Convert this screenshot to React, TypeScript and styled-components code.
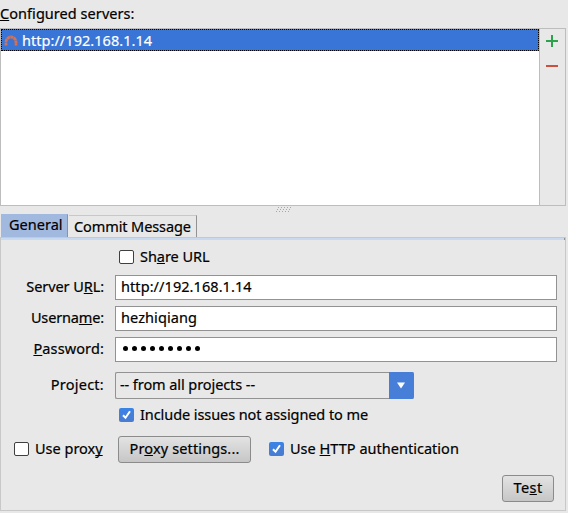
import React from 'react';
import styled, { createGlobalStyle } from 'styled-components';

const GlobalStyle = createGlobalStyle`
  * { box-sizing: border-box; }
  body { margin: 0; background: #e8e8e8; overflow: hidden; }
`;

const Window = styled.main`
  width: 568px;
  height: 513px;
  display: flex;
  flex-direction: column;
  background: #e8e8e8;
  color: #000;
  font: 14.5px/20px "Noto Sans", "Open Sans", sans-serif;
`;

const Text = styled.span<{ $track?: number }>`
  white-space: pre;
  letter-spacing: ${(p) => p.$track ?? 0}px;
  -webkit-text-stroke: 0.2px currentColor;
`;

const Mnemonic = styled.u`
  text-decoration-thickness: 1px;
  text-underline-offset: 1px;
  text-decoration-skip-ink: none;
`;

const Heading = styled.header`
  height: 28px;
  padding-top: 3px;
`;

const ServerBox = styled.section`
  display: flex;
  width: 566px;
  height: 178px;
  border: 1px solid #bdbdbd;
`;

const ServerList = styled.div`
  flex: 1;
  background: #fff;
`;

const ServerItem = styled.div`
  display: flex;
  align-items: center;
  gap: 4px;
  height: 22px;
  padding: 0 0 1px 2px;
  color: #fff;
  background: #3875d7;
  border: 1px dotted #000;
`;

const ListTools = styled.div`
  width: 26px;
  display: flex;
  flex-direction: column;
  align-items: center;
  gap: 12px;
  padding-top: 6px;
  border-left: 1px solid #bdbdbd;
  svg { display: block; margin-right: 1px; }
`;

const Splitter = styled.div`
  display: flex;
  justify-content: center;
  width: 566px;
  height: 8px;
  padding-top: 1px;
`;

const TabBar = styled.nav`
  display: flex;
  align-items: flex-end;
  gap: 1px;
  height: 23px;
  padding-left: 1px;
`;

const Tab = styled.div<{ $active?: boolean }>`
  width: ${(p) => (p.$active ? 67 : 128)}px;
  height: ${(p) => (p.$active ? 23 : 22)}px;
  padding: ${(p) => (p.$active ? '0 0 0 8px' : '0 0 0 5px')};
  line-height: ${(p) => (p.$active ? 18 : 20)}px;
  background: ${(p) => (p.$active ? '#a2b9df' : '#e8e8e8')};
  border-top: 1px solid ${(p) => (p.$active ? '#a2b9df' : '#c8c8c8')};
  border-right: 1px solid #929292;
`;

const Panel = styled.section`
  width: 566px;
  height: 274px;
  border: 1px solid #c8c8c8;
`;

const TabStripe = styled.div`
  height: 2px;
  background: #c7daf2;
  border-right: 1px solid #929292;
`;

const CheckRow = styled.div<{ $gap: number }>`
  display: flex;
  align-items: center;
  height: 20px;
  margin-top: ${(p) => p.$gap}px;
  padding-left: 118px;
`;

const Fields = styled.div`
  display: grid;
  grid-template-columns: 103px 442px;
  grid-auto-rows: 25px;
  gap: 6px 11px;
  margin-top: 9px;
`;

const FieldLabel = styled.label`
  display: flex;
  align-items: center;
  justify-content: flex-end;
  padding-bottom: 3px;
`;

const Field = styled.div`
  display: flex;
  align-items: center;
  padding: 0 0 3px 5px;
  background: #fff;
  border: 1px solid #929292;
`;

const Dots = styled.div`
  display: flex;
  gap: 4px;
  padding: 1px 0 0 2px;
`;

const Dot = styled.i`
  width: 5px;
  height: 5px;
  border-radius: 50%;
  background: #000;
`;

const ProjectRow = styled.div`
  display: grid;
  grid-template-columns: 103px 299px;
  column-gap: 11px;
  height: 27px;
  margin-top: 10px;
`;

const Combo = styled.div`
  display: flex;
  border: 1px solid #929292;
  border-right: 0;
  border-radius: 2px;
`;

const ComboText = styled.div`
  flex: 1;
  display: flex;
  align-items: center;
  padding: 0 0 3px 4px;
`;

const ComboArrow = styled.div`
  width: 25px;
  margin: -1px 0;
  padding-right: 1px;
  display: grid;
  place-items: center;
  background: #477fd8;
  border-radius: 0 2px 2px 0;
`;

const Box = styled.i<{ $on?: boolean }>`
  display: block;
  flex: none;
  width: 15px;
  height: 14px;
  margin: 2px 6px 0 0;
  background: ${(p) => (p.$on ? 'linear-gradient(#3b83e6, #4a7bd0)' : '#fff')};
  border: ${(p) => (p.$on ? '0' : '1px solid #3f3f3f')};
  border-radius: 2px;
  svg { display: block; }
`;

const ProxyRow = styled.div`
  display: flex;
  align-items: center;
  height: 27px;
  margin-top: 12px;
  padding-left: 13px;
`;

const ProxyCheck = styled.div<{ $width?: number }>`
  display: flex;
  align-items: center;
  width: ${(p) => (p.$width ? `${p.$width}px` : 'auto')};
  padding-bottom: 3px;
`;

const Button = styled.button<{ $width: number }>`
  display: flex;
  align-items: center;
  justify-content: center;
  width: ${(p) => p.$width}px;
  height: 27px;
  padding: 0 0 3px;
  color: #000;
  font: inherit;
  background: linear-gradient(#e3e3e3, #c6c6c6);
  border: 1px solid #8b8b8b;
  border-radius: 3px;
`;

const ProxyButton = styled(Button)`
  margin-right: 18px;
`;

const Footer = styled.footer`
  display: flex;
  justify-content: flex-end;
  margin-top: 12px;
  padding-right: 11px;
`;

function Check({ on }: { on?: boolean }) {
  return (
    <Box $on={on}>
      {on && (
        <svg width="15" height="14" viewBox="0 0 15 14">
          <path d="M4 7.2 6.5 9.7 11 3.2" fill="none" stroke="#fff" strokeWidth="2" />
        </svg>
      )}
    </Box>
  );
}

const ServerIcon = () => (
  <svg width="14" height="14" viewBox="0 0 14 14">
    <path d="M2 12.5V9.2a5 5.2 0 0 1 10 0v3.3" fill="none" stroke="#d9704f" strokeWidth="2.8" strokeDasharray="3.1 .35" />
  </svg>
);

export default function App() {
  return (
    <Window>
      <GlobalStyle />
      <Heading>
        <Text $track={0.05}><Mnemonic>C</Mnemonic>onfigured servers:</Text>
      </Heading>
      <ServerBox>
        <ServerList>
          <ServerItem>
            <ServerIcon />
            <Text $track={0.04}>http://192.168.1.14</Text>
          </ServerItem>
        </ServerList>
        <ListTools>
          <svg width="12" height="12"><path d="M0 6H12M6 0V12" stroke="#2ba34d" strokeWidth="2" /></svg>
          <svg width="12" height="14"><path d="M0 7H12" stroke="#cc4f40" strokeWidth="2" /></svg>
        </ListTools>
      </ServerBox>
      <Splitter>
        <svg width="15" height="5">
          <path d="M2 .5h1m2 0h1m2 0h1m2 0h1m2 0h1M1 2.5h1m2 0h1m2 0h1m2 0h1m2 0h1M0 4.5h1m2 0h1m2 0h1m2 0h1m2 0h1" stroke="#a8a8a8" />
        </svg>
      </Splitter>
      <TabBar>
        <Tab $active><Text $track={0.02}>General</Text></Tab>
        <Tab><Text $track={-0.1}>Commit Message</Text></Tab>
      </TabBar>
      <Panel>
        <TabStripe />
        <CheckRow $gap={6}>
          <Check />
          <Text $track={-0.05}>Sh<Mnemonic>a</Mnemonic>re URL</Text>
        </CheckRow>
        <Fields>
          <FieldLabel><Text $track={-0.08}>Server U<Mnemonic>R</Mnemonic>L:</Text></FieldLabel>
          <Field><Text $track={0.07}>http://192.168.1.14</Text></Field>
          <FieldLabel><Text $track={-0.15}>Userna<Mnemonic>m</Mnemonic>e:</Text></FieldLabel>
          <Field><Text $track={0.08}>hezhiqiang</Text></Field>
          <FieldLabel><Text $track={0.12}><Mnemonic>P</Mnemonic>assword:</Text></FieldLabel>
          <Field>
            <Dots>{Array.from({ length: 9 }, (_, i) => <Dot key={i} />)}</Dots>
          </Field>
        </Fields>
        <ProjectRow>
          <FieldLabel><Text $track={0.25}>Project:</Text></FieldLabel>
          <Combo>
            <ComboText><Text $track={-0.08}>-- from all projects --</Text></ComboText>
            <ComboArrow>
              <svg width="8" height="7"><path d="M0 .5H8L4 6.5Z" fill="#fff" /></svg>
            </ComboArrow>
          </Combo>
        </ProjectRow>
        <CheckRow $gap={5}>
          <Check on />
          <Text $track={-0.08}>Include issues not assigned to me</Text>
        </CheckRow>
        <ProxyRow>
          <ProxyCheck $width={104}>
            <Check />
            <Text>Use prox<Mnemonic>y</Mnemonic></Text>
          </ProxyCheck>
          <ProxyButton $width={133}>
            <Text $track={0.13}>Pr<Mnemonic>o</Mnemonic>xy settings...</Text>
          </ProxyButton>
          <ProxyCheck>
            <Check on />
            <Text $track={0.02}>Use <Mnemonic>H</Mnemonic>TTP authentication</Text>
          </ProxyCheck>
        </ProxyRow>
        <Footer>
          <Button $width={52}><Text $track={0.4}>Te<Mnemonic>s</Mnemonic>t</Text></Button>
        </Footer>
      </Panel>
    </Window>
  );
}
